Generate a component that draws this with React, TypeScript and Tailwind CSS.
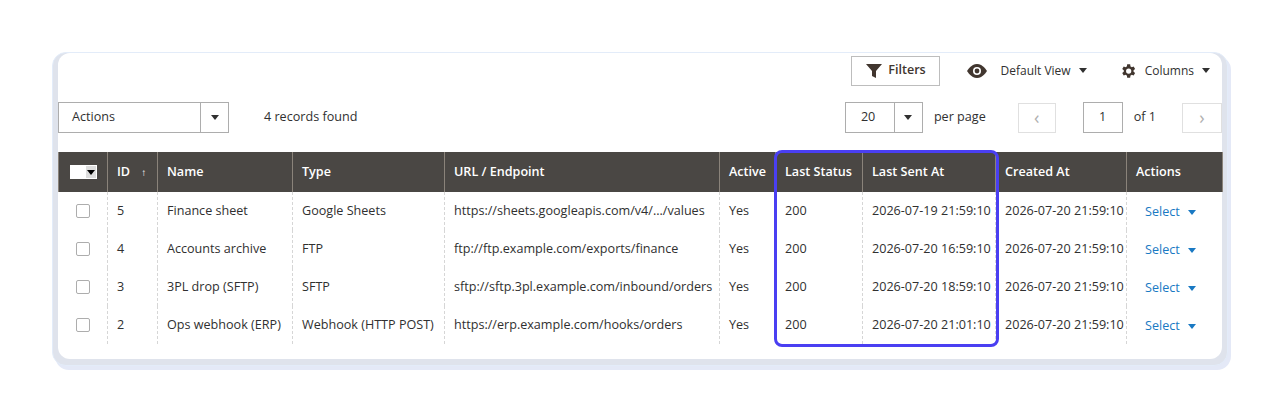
import React from "react";

const rows = [
  ["5", "Finance sheet", "Google Sheets", "https://sheets.googleapis.com/v4/.../values", "Yes", "200", "2026-07-19 21:59:10", "2026-07-20 21:59:10"],
  ["4", "Accounts archive", "FTP", "ftp://ftp.example.com/exports/finance", "Yes", "200", "2026-07-20 16:59:10", "2026-07-20 21:59:10"],
  ["3", "3PL drop (SFTP)", "SFTP", "sftp://sftp.3pl.example.com/inbound/orders", "Yes", "200", "2026-07-20 18:59:10", "2026-07-20 21:59:10"],
  ["2", "Ops webhook (ERP)", "Webhook (HTTP POST)", "https://erp.example.com/hooks/orders", "Yes", "200", "2026-07-20 21:01:10", "2026-07-20 21:59:10"],
];
const widths = [49, 50, 135, 152, 275, 56, 87, 133, 131, 96];
const heads = ["", "ID", "Name", "Type", "URL / Endpoint", "Active", "Last Status", "Last Sent At", "Created At", "Actions"];

const Caret = () => <svg width="8" height="5" viewBox="0 0 8 5"><path d="M0 0h8L4 5z" fill="currentColor" /></svg>;

export default function App() {
  return (
    <div className="w-[1280px] h-[418px] bg-white text-[#303030] text-[12.6px]" style={{ fontFamily: '"Open Sans", sans-serif' }}>
      <div className="pt-[52px] pl-[52px]">
        <div className="w-[1176px] h-[314px] rounded-[14px] bg-[#dfe3ec] border border-[#e3ecf9] shadow-[3px_4px_0_#e4e9f7]">
          <div className="ml-[5px] mr-[5px] h-[306px] bg-white rounded-[12px] relative">
            <div className="flex justify-end items-center h-[33px] pt-[2px] pr-[12px]">
              <div className="w-[89px] h-[30px] border border-[#bdbdbd] flex items-center justify-center gap-[6px] font-semibold text-[#41362f] mr-[26px]">
                <svg width="16" height="14" viewBox="0 0 16 14"><path d="M0 0h16l-6 7v7l-4-2V7z" fill="#41362f" /></svg>Filters
              </div>
              <div className="flex items-center text-[12px] mr-[18px]">
                <svg width="22" height="14" viewBox="0 0 22 14" className="mr-[12px]"><path d="M11 0C5 0 1 7 1 7s4 7 10 7 10-7 10-7S17 0 11 0z" fill="#41362f"/><circle cx="11" cy="7" r="4" fill="white"/><circle cx="11" cy="7" r="2.4" fill="#41362f"/></svg>
                Default View<span className="ml-[8px] text-[#303030]"><Caret /></span>
              </div>
              <div className="flex items-center text-[12px] ml-[14px]">
                <svg width="18" height="18" viewBox="0 0 24 24" className="mr-[8px]" fill="#41362f"><path d="M19.4 13a7.5 7.5 0 000-2l2.1-1.6-2-3.5-2.5 1a7.6 7.6 0 00-1.7-1L14.9 3h-4l-.4 2.9a7.6 7.6 0 00-1.7 1l-2.5-1-2 3.5L6.4 11a7.5 7.5 0 000 2l-2.1 1.6 2 3.5 2.5-1a7.6 7.6 0 001.7 1l.4 2.9h4l.4-2.9a7.6 7.6 0 001.7-1l2.5 1 2-3.5zM12.9 15.5a3.5 3.5 0 110-7 3.5 3.5 0 010 7z"/></svg>
                Columns<span className="ml-[8px]"><Caret /></span>
              </div>
            </div>
            <div className="flex items-center h-[31px] mt-[16px]">
              <div className="w-[171px] h-[31px] border border-[#adadad] flex">
                <div className="flex-1 pl-[13px] flex items-center">Actions</div>
                <div className="w-[28px] border-l border-[#adadad] flex items-center justify-center"><Caret /></div>
              </div>
              <div className="ml-[35px]">4 records found</div>
              <div className="ml-auto w-[78px] h-[31px] border border-[#adadad] flex">
                <div className="flex-1 pl-[15px] flex items-center">20</div>
                <div className="w-[28px] border-l border-[#adadad] flex items-center justify-center"><Caret /></div>
              </div>
              <div className="ml-[11px]">per page</div>
              <div className="ml-[32px] w-[38px] h-[30px] border border-[#e0e0e0] flex items-center justify-center text-[#b0b0b0] text-[18px]">‹</div>
              <div className="ml-[27px] w-[40px] h-[31px] border border-[#adadad] flex items-center justify-center">1</div>
              <div className="ml-[11px]">of 1</div>
              <div className="ml-[26px] w-[40px] h-[30px] border border-[#e0e0e0] flex items-center justify-center text-[#b0b0b0] text-[18px]">›</div>
            </div>
            <table className="mt-[19px] border-collapse table-fixed w-[1164px]">
              <thead>
                <tr className="h-[40px] bg-[#4a4744] text-white font-semibold text-[12.6px]">
                  {heads.map((h, i) => (
                    <th key={i} style={{ width: widths[i] }} className="text-left px-[9px] font-semibold whitespace-nowrap border-x border-[#8a837a]">
                      {i === 0 ? (
                        <div className="flex ml-[2px] w-[27px] h-[14px] border border-white"><div className="w-[15px] bg-white" /><div className="flex-1 flex items-center justify-center bg-[#ddd] text-black"><Caret /></div></div>
                      ) : i === 1 ? (
                        <span>ID <span className="ml-[8px] text-[10px]">↑</span></span>
                      ) : h}
                    </th>
                  ))}
                </tr>
              </thead>
              <tbody>
                {rows.map((r, ri) => (
                  <tr key={ri} className="h-[38px]">
                    <td className="border-r border-dashed border-[#d6d6d6] text-center"><div className="mx-auto w-[14px] h-[14px] border border-[#adadad] rounded-[2px]" /></td>
                    {r.map((c, ci) => (
                      <td key={ci} className="px-[9px] border-x border-dashed border-[#d6d6d6] whitespace-nowrap">{c}</td>
                    ))}
                    <td className="px-[18px] text-[#1979c3]"><span className="inline-flex items-center gap-[8px] pt-[3px]">Select <Caret /></span></td>
                  </tr>
                ))}
              </tbody>
            </table>
            <div className="absolute left-[716px] top-[97px] w-[225px] h-[197px] border-[3px] border-[#4a3ff2] rounded-[8px]" />
          </div>
        </div>
      </div>
    </div>
  );
}
